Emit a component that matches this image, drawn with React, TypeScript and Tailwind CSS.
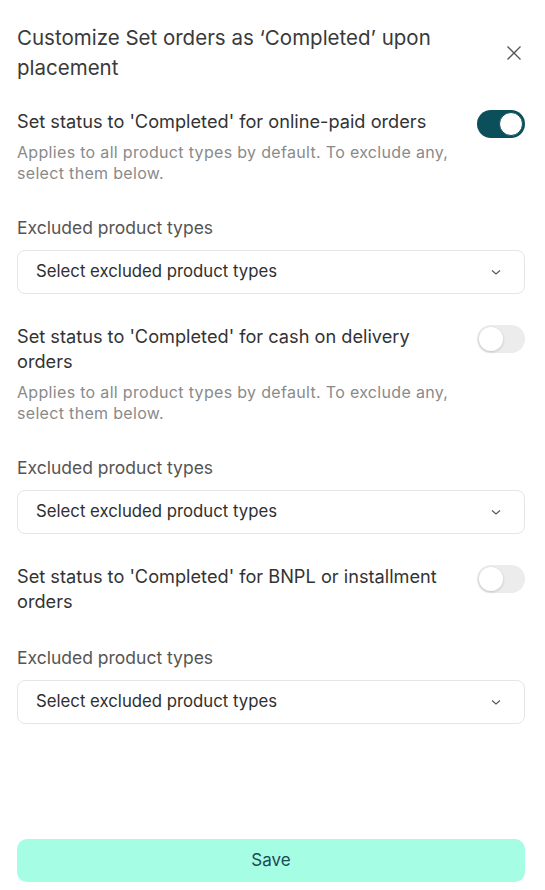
import React, { useState } from 'react';

const font = { fontFamily: 'Inter, "Noto Sans", sans-serif' };

const Toggle = ({ on, onClick }: { on: boolean; onClick: () => void }) => (
  <button
    onClick={onClick}
    className={`relative shrink-0 w-[48px] h-[28px] rounded-full ${on ? 'bg-[#0b4f5b]' : 'bg-[#ececec]'}`}
  >
    <span
      className={`absolute top-[2px] w-[24px] h-[24px] rounded-full bg-white ${on ? 'left-[22px] border border-[#0b4f5b]' : 'left-[2px] shadow-[0_1px_3px_rgba(0,0,0,0.18)]'}`}
    />
  </button>
);

const SelectBox = () => (
  <div className="mt-[10px] h-[44px] flex items-center justify-between rounded-[8px] border border-[#e6e6e6] pl-[18px] pr-[22px]">
    <span className="text-[16.75px] text-[#2f2f2f]">Select excluded product types</span>
    <svg width="12" height="12" viewBox="0 0 12 12" fill="none" stroke="#555" strokeWidth="1.1">
      <path d="M2 4.5 L6 8 L10 4.5" />
    </svg>
  </div>
);

type Section = { title: string; desc?: boolean };

const sections: Section[] = [
  { title: "Set status to 'Completed' for online-paid orders", desc: true },
  { title: "Set status to 'Completed' for cash on delivery orders", desc: true },
  { title: "Set status to 'Completed' for BNPL or installment orders" },
];

export default function App() {
  const [states, setStates] = useState([true, false, false]);

  return (
    <div style={font} className="w-[545px] h-[890px] bg-white pl-[17px] pr-[20px] flex flex-col text-[#333]">
      {/* header */}
      <div className="flex justify-between items-start pt-[23px]">
        <h2 className="text-[20.5px] leading-[30px] text-[#3a3a3a] w-[450px]">
          Customize Set orders as ‘Completed’ upon placement
        </h2>
        <button className="mt-[22px] mr-[3px] text-[#555]">
          <svg width="16" height="16" viewBox="0 0 16 16" stroke="currentColor" strokeWidth="1.3">
            <path d="M1.5 1.5 L14.5 14.5 M14.5 1.5 L1.5 14.5" />
          </svg>
        </button>
      </div>

      <div className="mt-[26px] flex flex-col gap-[30px]">
        {sections.map((s, i) => (
          <div key={i}>
            <div className="flex justify-between items-start gap-[32px]">
              <p className="flex-1 min-w-0 text-[18.2px] leading-[25px] text-[#333]">{s.title}</p>
              <div className="h-[25px] pt-[1px]">
                <Toggle
                  on={states[i]}
                  onClick={() => setStates(states.map((v, j) => (j === i ? !v : v)))}
                />
              </div>
            </div>
            {s.desc && (
              <p className="mt-[8px] text-[16px] tracking-[0.02em] leading-[21px] text-[#8a8a8a] w-[450px]">
                Applies to all product types by default. To exclude any, select them below.
              </p>
            )}
            <p className="mt-[32px] text-[17.5px] leading-[24px] text-[#555]">Excluded product types</p>
            <SelectBox />
          </div>
        ))}
      </div>

      <div className="flex-1" />
      <button className="mb-[8px] h-[43px] w-full rounded-[10px] bg-[#a5fde4] text-[17px] text-[#1c4a52]">
        Save
      </button>
    </div>
  );
}
